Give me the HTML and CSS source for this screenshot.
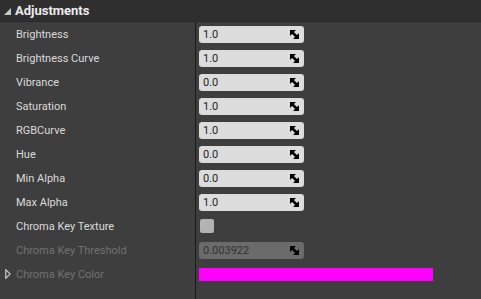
FILE: index.html
```html
<!DOCTYPE html>
<html>
<head>
	<meta charset="utf-8">
	<title>Adjustments</title>
	<link rel="stylesheet" href="styles.css">
</head>
<body>
	<div class="panel">
		<div class="head">
			<svg class="collapse" width="7" height="7" viewBox="0 0 7 7"><polygon points="7,0 7,7 0,7" fill="#c8c8c8"/></svg>
			<span>Adjustments</span>
		</div>
		<div class="rows">
			<div class="row"><div class="name">Brightness</div><div class="value"><div class="num"><span>1.0</span><svg class="spin" width="9" height="9" viewBox="0 0 9 9"><polygon points="0,0 6,0 0,6"/><polygon points="9,9 3,9 9,3"/><line x1="1" y1="1" x2="8" y2="8" stroke="#000" stroke-width="2.6"/></svg></div></div></div>
			<div class="row"><div class="name">Brightness Curve</div><div class="value"><div class="num"><span>1.0</span><svg class="spin" width="9" height="9" viewBox="0 0 9 9"><polygon points="0,0 6,0 0,6"/><polygon points="9,9 3,9 9,3"/><line x1="1" y1="1" x2="8" y2="8" stroke="#000" stroke-width="2.6"/></svg></div></div></div>
			<div class="row"><div class="name">Vibrance</div><div class="value"><div class="num"><span>0.0</span><svg class="spin" width="9" height="9" viewBox="0 0 9 9"><polygon points="0,0 6,0 0,6"/><polygon points="9,9 3,9 9,3"/><line x1="1" y1="1" x2="8" y2="8" stroke="#000" stroke-width="2.6"/></svg></div></div></div>
			<div class="row"><div class="name">Saturation</div><div class="value"><div class="num"><span>1.0</span><svg class="spin" width="9" height="9" viewBox="0 0 9 9"><polygon points="0,0 6,0 0,6"/><polygon points="9,9 3,9 9,3"/><line x1="1" y1="1" x2="8" y2="8" stroke="#000" stroke-width="2.6"/></svg></div></div></div>
			<div class="row"><div class="name">RGBCurve</div><div class="value"><div class="num"><span>1.0</span><svg class="spin" width="9" height="9" viewBox="0 0 9 9"><polygon points="0,0 6,0 0,6"/><polygon points="9,9 3,9 9,3"/><line x1="1" y1="1" x2="8" y2="8" stroke="#000" stroke-width="2.6"/></svg></div></div></div>
			<div class="row"><div class="name">Hue</div><div class="value"><div class="num"><span>0.0</span><svg class="spin" width="9" height="9" viewBox="0 0 9 9"><polygon points="0,0 6,0 0,6"/><polygon points="9,9 3,9 9,3"/><line x1="1" y1="1" x2="8" y2="8" stroke="#000" stroke-width="2.6"/></svg></div></div></div>
			<div class="row"><div class="name">Min Alpha</div><div class="value"><div class="num"><span>0.0</span><svg class="spin" width="9" height="9" viewBox="0 0 9 9"><polygon points="0,0 6,0 0,6"/><polygon points="9,9 3,9 9,3"/><line x1="1" y1="1" x2="8" y2="8" stroke="#000" stroke-width="2.6"/></svg></div></div></div>
			<div class="row"><div class="name">Max Alpha</div><div class="value"><div class="num"><span>1.0</span><svg class="spin" width="9" height="9" viewBox="0 0 9 9"><polygon points="0,0 6,0 0,6"/><polygon points="9,9 3,9 9,3"/><line x1="1" y1="1" x2="8" y2="8" stroke="#000" stroke-width="2.6"/></svg></div></div></div>
			<div class="row"><div class="name">Chroma Key Texture</div><div class="value"><div class="check"></div></div></div>
			<div class="row disabled"><div class="name">Chroma Key Threshold</div><div class="value"><div class="num"><span>0.003922</span><svg class="spin" width="9" height="9" viewBox="0 0 9 9"><polygon points="0,0 6,0 0,6"/><polygon points="9,9 3,9 9,3"/><line x1="1" y1="1" x2="8" y2="8" stroke="#000" stroke-width="2.6"/></svg></div></div></div>
			<div class="row disabled">
				<div class="name">
					<svg class="expand" width="6" height="10" viewBox="0 0 6 10"><polygon points="0.75,0.75 5.25,5 0.75,9.25" fill="none" stroke="#c8c8c8" stroke-width="1.2"/></svg>
					Chroma Key Color
				</div>
				<div class="value"><div class="color"></div></div>
			</div>
			<div class="row filler"><div class="name"></div><div class="value"></div></div>
		</div>
	</div>
</body>
</html>
```

FILE: styles.css
```css
*{
	margin: 0;
	padding: 0;
	box-sizing: border-box;
}
body{
	width: 481px;
	height: 299px;
	overflow: hidden;
	background: #3e3e3e;
	font-family: Roboto, "Noto Sans", sans-serif;
}
.panel{
	height: 299px;
	display: flex;
	flex-direction: column;
}
.head{
	height: 22px;
	flex-shrink: 0;
	display: flex;
	align-items: center;
	gap: 4px;
	padding-left: 4px;
	background: #2f2f2f;
	border-bottom: 1px solid #292929;
	color: #ececec;
	font-size: 13px;
	font-weight: bold;
}
.head .collapse{
	margin-top: 1px;
}
.rows{
	flex: 1;
	display: flex;
	flex-direction: column;
}
.row{
	height: 24px;
	flex-shrink: 0;
	display: flex;
}
.row.filler{
	flex: 1;
}
.name{
	width: 195px;
	position: relative;
	display: flex;
	align-items: center;
	padding-left: 16px;
	color: #dadada;
	font-size: 11px;
}
.disabled .name{
	color: #717171;
}
.expand{
	position: absolute;
	left: 5px;
	top: 7px;
}
.value{
	flex: 1;
	display: flex;
	align-items: center;
	padding-left: 3px;
	border-left: 1px solid #1b1b1b;
}
.num{
	width: 105px;
	height: 17px;
	display: flex;
	align-items: center;
	justify-content: space-between;
	padding: 0 5px 0 4px;
	background: #dcdcdc;
	border-radius: 3px;
	color: #1c1c1c;
	font-size: 11px;
}
.spin polygon{
	fill: #000;
}
.disabled .num{
	background: #6b6b6b;
	color: #323232;
}
.check{
	width: 14px;
	height: 14px;
	margin-left: 1px;
	background: #b3b3b3;
	border-radius: 2px;
}
.color{
	width: 234px;
	height: 13px;
	background: #ff00ff;
}
```
